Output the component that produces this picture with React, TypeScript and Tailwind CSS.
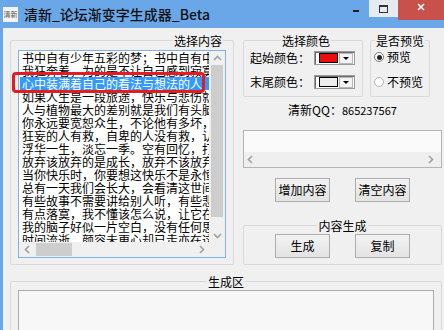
import React from 'react';

const lines = [
  '书中自有少年五彩的梦；书中自有中年',
  '我狂奔着，为的是不让自己感到寂寞',
  '心中装满着自己的看法与想法的人',
  '如果人生是一段旅途，快乐与悲伤就',
  '人与植物最大的差别就是我们有头脑',
  '你永远要宽恕众生，不论他有多坏，',
  '狂妄的人有救，自卑的人没有救，认',
  '浮华一生，淡忘一季。空有回忆，打',
  '放弃该放弃的是成长，放弃不该放弃',
  '当你快乐时，你要想这快乐不是永恒',
  '总有一天我们会长大，会看清这世间',
  '有些故事不需要讲给别人听，有些悲',
  '有点落寞，我不懂该怎么说，让它在',
  '我的脑子好似一片空白，没有任何思',
  '时间流逝，颜容未更心却已走亦在这',
];

const Chevron = ({ dir }: { dir: 'up' | 'down' | 'left' | 'right' }) => {
  const d = {
    up: 'M2 7 L5.5 3.5 L9 7',
    down: 'M2 4 L5.5 7.5 L9 4',
    left: 'M7 2 L3.5 5.5 L7 9',
    right: 'M4 2 L7.5 5.5 L4 9',
  }[dir];
  return (
    <svg width="11" height="11" viewBox="0 0 11 11">
      <path d={d} fill="none" stroke="#a3a3a3" strokeWidth="1.7" />
    </svg>
  );
};

const ColorCombo = ({ swatch }: { swatch: string }) => (
  <div className="w-[41px] h-[14px] border border-[#9a9a9a] bg-white flex items-center shadow-[inset_1px_1px_0_#6d6d6d]">
    <div className={`ml-[4px] w-[19px] h-[10px] border border-black ${swatch}`} />
    <div className="ml-auto mr-[1px] w-[14px] h-[11px] bg-[#f3f3f3] border border-[#b5b5b5] flex items-center justify-center">
      <div className="w-0 h-0 border-l-[3px] border-r-[3px] border-t-[3px] border-l-transparent border-r-transparent border-t-black" />
    </div>
  </div>
);

const Radio = ({ checked, label }: { checked?: boolean; label: string }) => (
  <div className="flex items-center h-[14px] pl-[3px]">
    <div
      className={`w-[10px] h-[10px] rounded-full border bg-white flex items-center justify-center ${
        checked ? 'border-[#7a7a7a]' : 'border-[#b4b4b4]'
      }`}
    >
      {checked && <div className="w-[5px] h-[5px] rounded-full bg-[#262626]" />}
    </div>
    <span className="ml-[3px] leading-[14px]">{label}</span>
  </div>
);

const Btn = ({ children }: { children: React.ReactNode }) => (
  <div className="w-[55px] h-[24px] border border-[#adadad] bg-linear-to-b from-[#f2f2f2] to-[#e3e3e3] flex items-center justify-center">
    {children}
  </div>
);

const GroupTitle = ({ children, align }: { children: React.ReactNode; align: string }) => (
  <div className={`-mt-[8px] h-[15px] leading-[15px] flex ${align}`}>
    <span className="bg-[#f0f0f0] px-[1px]">{children}</span>
  </div>
);

export default function App() {
  return (
    <div className="w-[444px] h-[330px] overflow-hidden bg-[#6aa7e8] flex flex-col text-[12px] text-black font-['Noto_Sans_CJK_SC','Microsoft_YaHei',sans-serif]">
      {/* title bar */}
      <div className="h-[28px] flex items-center shrink-0">
        <div className="ml-[3px] w-[15px] h-[15px] bg-[#f4f4f4] flex items-center justify-center overflow-hidden">
          <span className="text-[7px] leading-[7px] text-[#555]">清新</span>
        </div>
        <span className="ml-[6px] text-[14px] font-medium text-[#111]">清新_论坛渐变字生成器_Beta</span>
        <div className="ml-auto self-start flex">
          <div className="w-[26px] h-[17px] flex items-center justify-center">
            <div className="w-[6px] h-[2px] bg-[#1c1c1c] mt-[5px]" />
          </div>
          <div className="w-[29px] h-[17px] bg-[#e6ebf1] flex items-center justify-center">
            <div className="w-[9px] h-[8px] border border-[#333] border-t-2" />
          </div>
          <div className="w-[46px] h-[20px] bg-[#c9514c] flex items-start justify-center pt-[3px]">
            <svg width="8" height="8" viewBox="0 0 8 8">
              <path d="M1 1 L7 7 M7 1 L1 7" stroke="white" strokeWidth="1.6" />
            </svg>
          </div>
        </div>
      </div>

      {/* body */}
      <div className="flex-1 ml-[3px] bg-[#f0f0f0] pt-[12px] pl-[7px] pr-[2px] flex flex-col">
        <div className="flex gap-[9px]">
          {/* 选择内容 */}
          <div className="relative w-[224px] h-[225px] border border-[#d9d9d9] rounded-[2px] px-[7px]">
            <GroupTitle align="justify-end pr-[3px]">选择内容</GroupTitle>
            <div className="mt-[2px] w-[208px] h-[208px] border border-[#80b3e4] bg-white flex flex-col">
              <div className="flex h-[191px]">
                <div className="w-[190px] overflow-hidden pl-[1px]">
                  {lines.map((l, i) => (
                    <div
                      key={i}
                      className={`h-[13px] leading-[13px] pl-[2px] whitespace-nowrap ${
                        i === 2 ? 'bg-[#3399ff] text-white' : ''
                      }`}
                    >
                      {l}
                    </div>
                  ))}
                </div>
                <div className="w-[16px] bg-[#f0f0f0] flex flex-col">
                  <div className="h-[14px] flex items-center justify-center">
                    <Chevron dir="up" />
                  </div>
                  <div className="h-[152px] mx-[2px] bg-[#cdcdcd]" />
                  <div className="flex-1" />
                  <div className="h-[14px] flex items-center justify-center">
                    <Chevron dir="down" />
                  </div>
                </div>
              </div>
              <div className="flex h-[15px]">
                <div className="w-[190px] bg-[#f0f0f0] flex items-center">
                  <div className="w-[16px] flex justify-center">
                    <Chevron dir="left" />
                  </div>
                  <div className="ml-[1px] w-[36px] h-[13px] bg-[#cdcdcd]" />
                  <div className="flex-1" />
                  <div className="w-[16px] flex justify-center">
                    <Chevron dir="right" />
                  </div>
                </div>
                <div className="w-[16px] bg-[#f0f0f0]" />
              </div>
            </div>
            <div className="absolute left-[1px] top-[31px] w-[193px] h-[21px] border-[3px] border-[#e41b21] rounded-[4px]" />
          </div>

          {/* right column */}
          <div className="w-[199px] flex flex-col">
            <div className="flex gap-[7px]">
              <div className="w-[120px] h-[57px] border border-[#d9d9d9] rounded-[2px] pl-[6px]">
                <GroupTitle align="justify-center">选择颜色</GroupTitle>
                <div className="mt-[3px] flex items-center h-[14px]">
                  <span className="w-[64px] leading-[14px]">起始颜色：</span>
                  <ColorCombo swatch="bg-[#ee0d0d]" />
                </div>
                <div className="mt-[10px] flex items-center h-[14px]">
                  <span className="w-[64px] leading-[14px]">末尾颜色：</span>
                  <ColorCombo swatch="bg-[#ededed]" />
                </div>
              </div>
              <div className="w-[60px] h-[57px] border border-[#d9d9d9] rounded-[2px]">
                <GroupTitle align="justify-center">是否预览</GroupTitle>
                <div className="mt-[2px]">
                  <Radio checked label="预览" />
                </div>
                <div className="mt-[11px]">
                  <Radio label="不预览" />
                </div>
              </div>
            </div>

            <div className="mt-[6px] h-[14px] leading-[14px] text-center">
              清新QQ：<span className="text-[11px]">865237567</span>
            </div>

            <div className="mt-[13px] h-[38px] border border-[#b4b4b4] bg-[#fafafa] flex flex-col">
              <div className="flex-1" />
              <div className="h-[15px] bg-[#efefef] flex items-center justify-between pl-[1px] pr-[5px]">
                <Chevron dir="left" />
                <Chevron dir="right" />
              </div>
            </div>

            <div className="mt-[10px] flex justify-center gap-[25px]">
              <Btn>增加内容</Btn>
              <Btn>清空内容</Btn>
            </div>

            <div className="mt-[23px] h-[40px] border border-[#d9d9d9] rounded-[2px]">
              <GroupTitle align="justify-center">内容生成</GroupTitle>
              <div className="mt-[1px] flex justify-center gap-[25px]">
                <Btn>生成</Btn>
                <Btn>复制</Btn>
              </div>
            </div>
          </div>
        </div>

        {/* 生成区 */}
        <div className="mt-[16px] h-[70px] border border-[#d9d9d9] rounded-[2px] px-[7px]">
          <GroupTitle align="justify-center">生成区</GroupTitle>
          <div className="mt-[1px] h-[60px] border border-[#adadad] bg-[#f7f7f7]" />
        </div>
      </div>
    </div>
  );
}
